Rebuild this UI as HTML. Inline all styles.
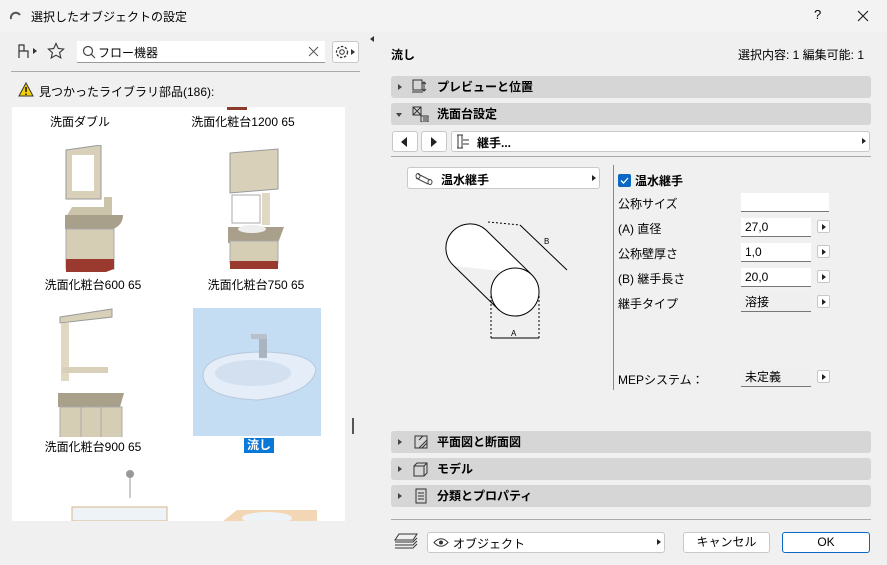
<!DOCTYPE html><html><head><meta charset="utf-8"><style>
*{box-sizing:border-box;margin:0;padding:0}
body{width:887px;height:565px;background:#f0f0f0;font-family:"Liberation Sans","Noto Sans CJK JP",sans-serif;font-size:12px;color:#000;position:relative;overflow:hidden}
.a{position:absolute}
.sec{position:absolute;left:391px;width:480px;height:22px;background:#d6d6d6;border-radius:3px;font-weight:bold;font-size:12px;line-height:22px}
.sec .tri{position:absolute;left:7px;top:8px;width:0;height:0;border-left:4px solid #444;border-top:3px solid transparent;border-bottom:3px solid transparent}
.sec .t{position:absolute;left:46px}
.inp{position:absolute;background:#fff;border-bottom:1px solid #777;height:19px;line-height:18px;padding-left:4px}
.btn{position:absolute;background:#fff;border:1px solid #c8c8c8;border-radius:3px}
.sb{position:absolute;width:13px;height:13px;background:#fff;border:1px solid #c8c8c8;border-radius:2px}
.sb:after{content:"";position:absolute;left:4px;top:3px;border-left:4px solid #222;border-top:3px solid transparent;border-bottom:3px solid transparent}
.rt{position:absolute;border-left:4px solid #222;border-top:3px solid transparent;border-bottom:3px solid transparent}
.lbl{position:absolute;font-size:12px}
.cap{position:absolute;width:160px;text-align:center;font-size:12px}
</style></head><body>
<div class="a" style="left:0;top:0;width:887px;height:32px;background:#f3f3f3"></div>
<svg class="a" style="left:9px;top:9px" width="12" height="12"><path d="M2 10 A5 5 0 0 1 11 6" stroke="#555" stroke-width="2" fill="none"/></svg>
<div class="a" style="left:31px;top:8px;font-size:12px">選択したオブジェクトの設定</div>
<div class="a" style="left:814px;top:7px;font-size:13px">?</div>
<svg class="a" style="left:857px;top:10px" width="12" height="12"><path d="M1 1L11 11M11 1L1 11" stroke="#222" stroke-width="1.2"/></svg>

<svg class="a" style="left:16px;top:42px" width="24" height="18"><path d="M3 16V3h5v6h4v7M3 9h5" stroke="#333" fill="none" stroke-width="1.2"/><path d="M17 6l4 3-4 3z" fill="#333"/></svg>
<svg class="a" style="left:47px;top:42px" width="18" height="18"><path d="M9 1.5l2.3 5 5.3.5-4 3.6 1.2 5.3L9 13.2 4.2 16l1.2-5.3-4-3.6 5.3-.5z" fill="none" stroke="#333" stroke-width="1.1"/></svg>
<div class="a" style="left:77px;top:41px;width:248px;height:22px;background:#fff;border-bottom:1px solid #999"></div>
<svg class="a" style="left:82px;top:45px" width="14" height="14"><circle cx="6" cy="6" r="4.5" stroke="#444" fill="none" stroke-width="1.2"/><path d="M9.3 9.3L13 13" stroke="#444" stroke-width="1.2"/></svg>
<div class="a" style="left:98px;top:44px">フロー機器</div>
<svg class="a" style="left:308px;top:46px" width="11" height="11"><path d="M1 1L10 10M10 1L1 10" stroke="#555" stroke-width="1"/></svg>
<div class="btn" style="left:332px;top:41px;width:27px;height:22px"></div>
<svg class="a" style="left:334px;top:43px" width="24" height="18"><circle cx="8" cy="9" r="5.5" stroke="#333" fill="none" stroke-width="1.3" stroke-dasharray="2.5 1.6"/><circle cx="8" cy="9" r="2.3" stroke="#333" fill="none"/><path d="M17 6l4 3-4 3z" fill="#333"/></svg>
<div class="a" style="left:11px;top:71px;width:349px;height:1px;background:#aaa"></div>
<svg class="a" style="left:18px;top:82px" width="16" height="15"><path d="M8 1L15 14H1z" fill="#f5d000" stroke="#333" stroke-width="1"/><path d="M8 5v5M8 11.5v1.5" stroke="#000" stroke-width="1.4"/></svg>
<div class="a" style="left:39px;top:83px">見つかったライブラリ部品(186):</div>

<div class="a" style="left:12px;top:107px;width:333px;height:414px;background:#fff;overflow:hidden">
 <div class="a" style="left:215px;top:0;width:20px;height:3px;background:#8b3a2b"></div>
 <div class="cap" style="left:-12px;top:6px">洗面ダブル</div>
 <div class="cap" style="left:151px;top:6px">洗面化粧台1200 65</div>
 <svg class="a" style="left:40px;top:38px" width="80" height="130"><path d="M14 5l35-5v54H14z" fill="#d8d0b8" stroke="#999"/><rect x="20" y="10" width="22" height="36" fill="#fff"/><path d="M20 62h32v-10h8v20H14z" fill="#ccc4aa"/><path d="M13 70h58q0 10-10 14H13z" fill="#a8a08a"/><path d="M14 84h48v40H14z" fill="#d6ceb4" stroke="#aaa"/><path d="M14 114h48v10l-8 3H14z" fill="#9a3a2e"/></svg>
 <div class="cap" style="left:1px;top:169px">洗面化粧台600 65</div>
 <svg class="a" style="left:200px;top:38px" width="80" height="130"><path d="M18 8l48-4v40l-48 4z" fill="#d8d0b8" stroke="#999"/><rect x="20" y="50" width="28" height="28" fill="#fff" stroke="#aaa"/><rect x="50" y="48" width="8" height="32" fill="#e0d8c2"/><path d="M16 82h56l-6 16H16z" fill="#a8a08a"/><ellipse cx="40" cy="84" rx="14" ry="4" fill="#eee"/><rect x="18" y="96" width="48" height="22" fill="#d6ceb4" stroke="#aaa"/><rect x="18" y="116" width="48" height="8" fill="#9a3a2e"/></svg>
 <div class="cap" style="left:164px;top:169px">洗面化粧台750 65</div>
 <svg class="a" style="left:34px;top:200px" width="90" height="130"><path d="M14 10l52-8v8l-52 6z" fill="#d8d0b8" stroke="#999"/><rect x="15" y="16" width="8" height="58" fill="#e0d8c2"/><rect x="23" y="18" width="36" height="42" fill="#fff"/><path d="M16 60h46v6H16z" fill="#d8d0b8"/><path d="M12 86h66l-4 14H12z" fill="#a8a08a"/><path d="M14 100h62v32H14z" fill="#d6ceb4" stroke="#aaa"/><path d="M35 100v30M55 100v30" stroke="#aaa"/></svg>
 <div class="cap" style="left:1px;top:331px">洗面化粧台900 65</div>
 <div class="a" style="left:181px;top:201px;width:128px;height:128px;background:#c4ddf3"></div>
 <svg class="a" style="left:181px;top:201px" width="128" height="128"><path d="M10 68q0-22 55-24 55 0 58 18-5 24-58 30Q12 90 10 68z" fill="#e4edf8" stroke="#b8c8dc"/><ellipse cx="60" cy="65" rx="38" ry="13" fill="#d2e0f0"/><rect x="66" y="26" width="8" height="24" fill="#aab4c0"/><rect x="58" y="26" width="16" height="5" fill="#b8c0cc"/></svg>
 <div class="a" style="left:232px;top:331px;background:#0a78d7;color:#fff;font-weight:bold;padding:0 3px;line-height:15px">流し</div>
 <svg class="a" style="left:50px;top:362px" width="110" height="52"><circle cx="68" cy="5" r="4" fill="#999"/><path d="M68 9v20" stroke="#999"/><rect x="10" y="38" width="95" height="14" fill="#eef3f8" stroke="#d6b48e"/></svg>
 <svg class="a" style="left:205px;top:395px" width="110" height="20"><path d="M5 20l15-12h80v12z" fill="#f3d6b4"/><ellipse cx="50" cy="16" rx="25" ry="6" fill="#eef3f8"/></svg>
</div>
<div class="a" style="left:345px;top:107px;width:15px;height:414px;background:#f0f0f0"></div>
<div class="a" style="left:352px;top:418px;width:2px;height:16px;background:#555"></div>
<div class="a" style="left:370px;top:36px;border-right:4px solid #333;border-top:3px solid transparent;border-bottom:3px solid transparent"></div>

<div class="a" style="left:391px;top:46px;font-weight:bold">流し</div>
<div class="a" style="left:738px;top:46px">選択内容: 1 編集可能: 1</div>
<div class="sec" style="top:76px"><div class="tri"></div><svg class="a" style="left:20px;top:3px" width="20" height="16"><rect x="2" y="1" width="9" height="10" fill="none" stroke="#333"/><path d="M1 13h11M13 3v9M11 5l2-2 2 2M11 10l2 2 2-2" stroke="#333" fill="none"/></svg><span class="t">プレビューと位置</span></div>
<div class="sec" style="top:103px"><div class="tri" style="left:5px;top:10px;border-top:4px solid #444;border-left:3px solid transparent;border-right:3px solid transparent;border-bottom:0"></div><svg class="a" style="left:20px;top:3px" width="20" height="16"><rect x="2" y="1" width="8" height="8" fill="none" stroke="#333"/><path d="M2 1l8 8M10 1l-8 8M10 10h7v6h-7zM12 12h4M12 14h4" stroke="#333" fill="none"/></svg><span class="t">洗面台設定</span></div>
<div class="btn" style="left:392px;top:131px;width:26px;height:21px"></div><div class="a" style="left:401px;top:137px;border-right:6px solid #222;border-top:5px solid transparent;border-bottom:5px solid transparent"></div>
<div class="btn" style="left:421px;top:131px;width:26px;height:21px"></div><div class="a" style="left:431px;top:137px;border-left:6px solid #222;border-top:5px solid transparent;border-bottom:5px solid transparent"></div>
<div class="btn" style="left:451px;top:131px;width:419px;height:21px"></div>
<svg class="a" style="left:453px;top:133px" width="22" height="18"><path d="M4 2h6M4 15h6M5 2v13M9 2v13M10 7h6M10 11h6" stroke="#333" fill="none"/></svg>
<div class="a" style="left:477px;top:134px;font-weight:bold">継手...</div>
<div class="rt" style="left:862px;top:138px"></div>
<div class="a" style="left:391px;top:156px;width:480px;height:1px;background:#aaa"></div>

<div class="btn" style="left:407px;top:167px;width:193px;height:22px"></div>
<svg class="a" style="left:415px;top:171px" width="20" height="14"><path d="M3 3l12 6M1 7l12 6" stroke="#444" fill="none"/><ellipse cx="3" cy="5" rx="2" ry="2.5" fill="none" stroke="#444"/><ellipse cx="15" cy="11" rx="2" ry="2.5" fill="none" stroke="#444"/></svg>
<div class="a" style="left:441px;top:171px;font-weight:bold">温水継手</div>
<div class="rt" style="left:592px;top:175px"></div>
<svg class="a" style="left:440px;top:218px" width="135" height="130"><g fill="none" stroke="#000" stroke-width="1"><path d="M14 48A24 24 0 0 1 46 12L91 56M14 48L59 92" fill="#fff"/><circle cx="75" cy="74" r="24" fill="#fff"/><path d="M48 4L80 7" stroke-dasharray="2 2"/><path d="M80 7L127 52"/><path d="M51 78v44M99 78v44" stroke-dasharray="2 2"/><path d="M51 120h48"/></g><text x="104" y="26" font-size="8" font-family="Liberation Sans">B</text><text x="71" y="118" font-size="8" font-family="Liberation Sans">A</text></svg>
<div class="a" style="left:613px;top:165px;width:1px;height:225px;background:#888"></div>

<div class="a" style="left:618px;top:174px;width:13px;height:13px;background:#0a67c4;border-radius:2px"></div>
<svg class="a" style="left:618px;top:174px" width="13" height="13"><path d="M3 6.5l2.5 2.5 4.5-5" stroke="#fff" fill="none" stroke-width="1.3"/></svg>
<div class="a" style="left:635px;top:172px;font-weight:bold">温水継手</div>
<div class="lbl" style="left:618px;top:195px">公称サイズ</div><div class="inp" style="left:741px;top:193px;width:88px"></div>
<div class="lbl" style="left:618px;top:220px">(A) 直径</div><div class="inp" style="left:741px;top:218px;width:70px">27,0</div><div class="sb" style="left:817px;top:220px"></div>
<div class="lbl" style="left:618px;top:245px">公称壁厚さ</div><div class="inp" style="left:741px;top:243px;width:70px">1,0</div><div class="sb" style="left:817px;top:245px"></div>
<div class="lbl" style="left:618px;top:270px">(B) 継手長さ</div><div class="inp" style="left:741px;top:268px;width:70px">20,0</div><div class="sb" style="left:817px;top:270px"></div>
<div class="lbl" style="left:618px;top:295px">継手タイプ</div><div class="inp" style="left:741px;top:293px;width:70px;background:#efefef">溶接</div><div class="sb" style="left:817px;top:295px"></div>
<div class="lbl" style="left:618px;top:371px">MEPシステム：</div><div class="inp" style="left:741px;top:368px;width:70px;background:#efefef">未定義</div><div class="sb" style="left:817px;top:370px"></div>

<div class="sec" style="top:431px"><div class="tri"></div><svg class="a" style="left:20px;top:3px" width="20" height="16"><rect x="4" y="2" width="12" height="12" fill="none" stroke="#333"/><path d="M8 14l8-8M11 14l5-5M12 2l-4 4" stroke="#333"/></svg><span class="t">平面図と断面図</span></div>
<div class="sec" style="top:458px"><div class="tri"></div><svg class="a" style="left:20px;top:3px" width="20" height="16"><path d="M3 5h10v10H3zM3 5l3-3h10v10l-3 3M13 5l3-3" fill="none" stroke="#333"/></svg><span class="t">モデル</span></div>
<div class="sec" style="top:485px"><div class="tri"></div><svg class="a" style="left:20px;top:3px" width="20" height="16"><rect x="5" y="1" width="10" height="14" fill="none" stroke="#333"/><path d="M7 5h6M7 8h6M7 11h6" stroke="#333"/></svg><span class="t">分類とプロパティ</span></div>
<div class="a" style="left:391px;top:519px;width:480px;height:1px;background:#aaa"></div>

<svg class="a" style="left:393px;top:532px" width="26" height="18"><path d="M6 2h18l-4 6H2zM2 10h18l4-4M2 13h18l4-4M2 16h18l4-4" fill="none" stroke="#333"/></svg>
<div class="btn" style="left:427px;top:532px;width:238px;height:21px"></div>
<svg class="a" style="left:433px;top:537px" width="16" height="11"><path d="M1 5.5Q8 -2 15 5.5Q8 13 1 5.5z" fill="none" stroke="#333"/><circle cx="8" cy="5.5" r="2" fill="#333"/></svg>
<div class="a" style="left:453px;top:535px">オブジェクト</div>
<div class="rt" style="left:657px;top:539px"></div>
<div class="btn" style="left:683px;top:532px;width:87px;height:21px;text-align:center;line-height:19px">キャンセル</div>
<div class="btn" style="left:782px;top:532px;width:88px;height:21px;border-color:#0a67c4;text-align:center;line-height:19px">OK</div>
</body></html>
